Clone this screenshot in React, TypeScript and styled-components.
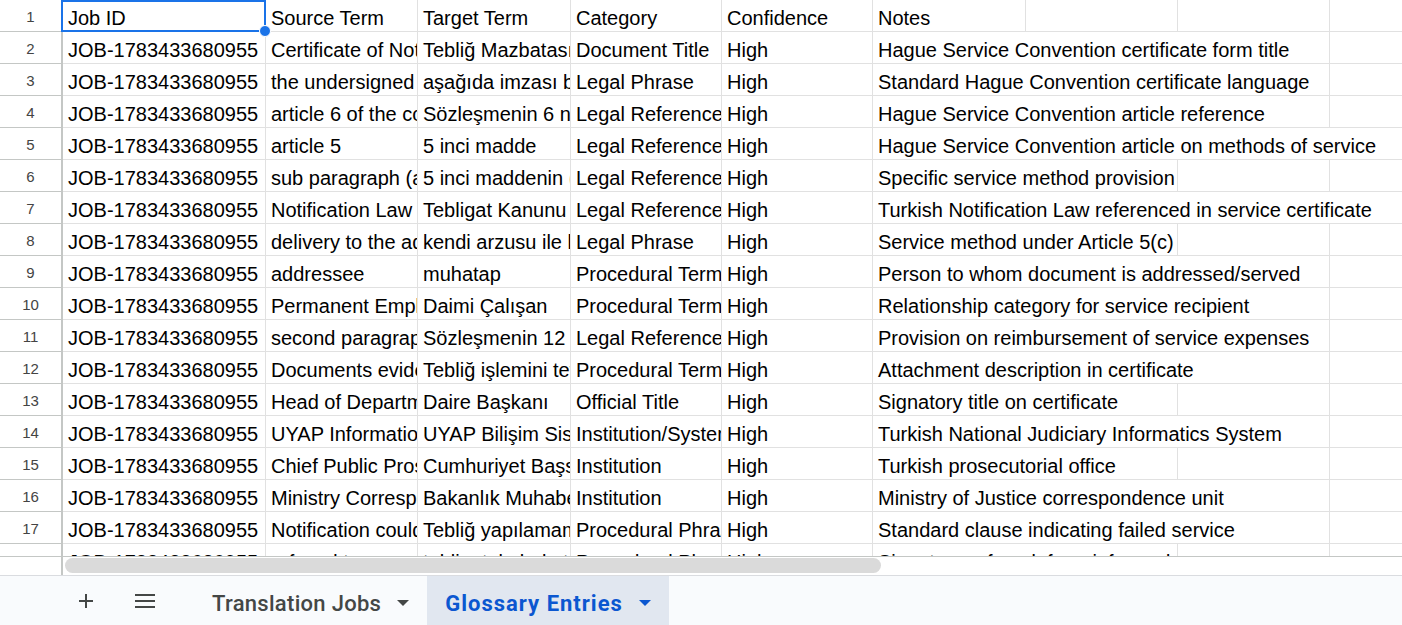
import * as React from 'react';
import styled, { createGlobalStyle } from 'styled-components';

// data
const COLUMN_WIDTHS = [203, 152, 153, 151, 151, 153, 152, 152, 152];

interface IEntry {
	readonly cells: string[];
	readonly noteSpan: number;
}

const JOB = 'JOB-1783433680955';

const ENTRIES: IEntry[] = [
	{ cells: ['Job ID', 'Source Term', 'Target Term', 'Category', 'Confidence', 'Notes'], noteSpan: 1 },
	{ cells: [JOB, 'Certificate of Notification', 'Tebliğ Mazbatası', 'Document Title', 'High', 'Hague Service Convention certificate form title'], noteSpan: 3 },
	{ cells: [JOB, 'the undersigned authority', 'aşağıda imzası bulunan makam', 'Legal Phrase', 'High', 'Standard Hague Convention certificate language'], noteSpan: 3 },
	{ cells: [JOB, 'article 6 of the convention', 'Sözleşmenin 6 ncı maddesi', 'Legal Reference', 'High', 'Hague Service Convention article reference'], noteSpan: 3 },
	{ cells: [JOB, 'article 5', '5 inci madde', 'Legal Reference', 'High', 'Hague Service Convention article on methods of service'], noteSpan: 4 },
	{ cells: [JOB, 'sub paragraph (a)', '5 inci maddenin (a) bendi', 'Legal Reference', 'High', 'Specific service method provision'], noteSpan: 2 },
	{ cells: [JOB, 'Notification Law No. 7201', 'Tebligat Kanunu 7201', 'Legal Reference', 'High', 'Turkish Notification Law referenced in service certificate'], noteSpan: 4 },
	{ cells: [JOB, 'delivery to the addressee', 'kendi arzusu ile kabul eden', 'Legal Phrase', 'High', 'Service method under Article 5(c)'], noteSpan: 2 },
	{ cells: [JOB, 'addressee', 'muhatap', 'Procedural Term', 'High', 'Person to whom document is addressed/served'], noteSpan: 3 },
	{ cells: [JOB, 'Permanent Employee', 'Daimi Çalışan', 'Procedural Term', 'High', 'Relationship category for service recipient'], noteSpan: 3 },
	{ cells: [JOB, 'second paragraph of article 12', 'Sözleşmenin 12 nci maddesi', 'Legal Reference', 'High', 'Provision on reimbursement of service expenses'], noteSpan: 3 },
	{ cells: [JOB, 'Documents evidencing service', 'Tebliğ işlemini tevsik eden', 'Procedural Term', 'High', 'Attachment description in certificate'], noteSpan: 3 },
	{ cells: [JOB, 'Head of Department', 'Daire Başkanı', 'Official Title', 'High', 'Signatory title on certificate'], noteSpan: 2 },
	{ cells: [JOB, 'UYAP Information System', 'UYAP Bilişim Sistemi', 'Institution/System', 'High', 'Turkish National Judiciary Informatics System'], noteSpan: 3 },
	{ cells: [JOB, "Chief Public Prosecutor's Office", 'Cumhuriyet Başsavcılığı', 'Institution', 'High', 'Turkish prosecutorial office'], noteSpan: 2 },
	{ cells: [JOB, 'Ministry Correspondence Unit', 'Bakanlık Muhaberat Birimi', 'Institution', 'High', 'Ministry of Justice correspondence unit'], noteSpan: 3 },
	{ cells: [JOB, 'Notification could not be made', 'Tebliğ yapılamamıştır', 'Procedural Phrase', 'High', 'Standard clause indicating failed service'], noteSpan: 3 },
	{ cells: [JOB, 'refused to accept', 'tebligatı kabul etmedi', 'Procedural Phrase', 'High', 'Signature refused, form informed'], noteSpan: 2 }
];

// helpers
const spanWidth = (start: number, span: number) =>
	COLUMN_WIDTHS.slice(start, start + span).reduce((a, b) => a + b, 0);

const renderRow = (entry: IEntry, index: number) => {
	const fixed = entry.cells.slice(0, 5).map((text, col) => (
		<Cell key={col} $width={COLUMN_WIDTHS[col]} $selected={index === 0 && col === 0}>
			{text}
		</Cell>
	));
	const noteEnd = 5 + entry.noteSpan;
	const rest = COLUMN_WIDTHS.slice(noteEnd).map((w, i) => <Cell key={noteEnd + i} $width={w} />);
	return (
		<Row key={index}>
			<RowHeader>{index + 1}</RowHeader>
			{fixed}
			<Cell $width={spanWidth(5, entry.noteSpan)}>{entry.cells[5]}</Cell>
			{rest}
		</Row>
	);
};

const PlusIcon = () => (
	<svg width="16" height="16" viewBox="0 0 16 16">
		<path d="M8 1v14M1 8h14" stroke="#444746" strokeWidth="2" fill="none" />
	</svg>
);

const MenuIcon = () => (
	<svg width="22" height="16" viewBox="0 0 22 16">
		<path d="M1 2h20M1 8h20M1 14h20" stroke="#444746" strokeWidth="2" fill="none" />
	</svg>
);

const Caret = ({ color }: { color: string }) => (
	<svg width="12" height="6" viewBox="0 0 12 6">
		<path d="M0 0h12L6 6z" fill={color} />
	</svg>
);

const App: React.FC = () => (
	<>
		<GlobalStyle />
		<Page>
			<GridArea>{ENTRIES.map(renderRow)}</GridArea>
			<ScrollStrip>
				<ScrollCorner />
				<ScrollTrack>
					<ScrollThumb />
				</ScrollTrack>
			</ScrollStrip>
			<TabBar>
				<IconButton>
					<PlusIcon />
				</IconButton>
				<IconButton>
					<MenuIcon />
				</IconButton>
				<SheetTab>
					Translation Jobs
					<Caret color="#444746" />
				</SheetTab>
				<SheetTab $active>
					Glossary Entries
					<Caret color="#0b57d0" />
				</SheetTab>
			</TabBar>
		</Page>
	</>
);

export default App;

// css
const GlobalStyle = createGlobalStyle`
	html, body {
		margin: 0;
		padding: 0;
		background: #ffffff;
		overflow: hidden;
	}
`;

const Page = styled.div`
	width: 1402px;
	height: 625px;
	display: flex;
	flex-direction: column;
	overflow: hidden;
	font-family: 'Liberation Sans', Arial, sans-serif;
`;

const GridArea = styled.div`
	height: 556px;
	overflow: hidden;
	flex-shrink: 0;
`;

const Row = styled.div`
	display: flex;
	height: 32px;
	width: max-content;
`;

const RowHeader = styled.div`
	width: 63px;
	flex-shrink: 0;
	border-right: 2px solid #c4c7c5;
	border-bottom: 1px solid #c4c7c5;
	display: flex;
	align-items: center;
	justify-content: center;
	font-size: 15px;
	color: #444;
	padding-top: 1px;
	box-sizing: border-box;
	height: 32px;
`;

const Cell = styled.div<{ $width: number; $selected?: boolean }>`
	position: relative;
	width: ${p => p.$width}px;
	flex-shrink: 0;
	height: 32px;
	box-sizing: border-box;
	border-right: 1px solid #e1e1e1;
	border-bottom: 1px solid #e1e1e1;
	padding: 0 0 1px 5px;
	display: flex;
	align-items: flex-end;
	font-size: 20px;
	color: #000;
	white-space: nowrap;
	overflow: ${p => (p.$selected ? 'visible' : 'hidden')};
	z-index: ${p => (p.$selected ? 2 : 'auto')};
	${p =>
		p.$selected &&
		`
		&::before {
			content: '';
			position: absolute;
			left: -2px;
			top: 0;
			right: -1px;
			bottom: -1px;
			border: 2px solid #1a73e8;
		}
		&::after {
			content: '';
			position: absolute;
			right: -6px;
			bottom: -6px;
			width: 10px;
			height: 10px;
			border-radius: 50%;
			background: #1a73e8;
			border: 1px solid #fff;
		}
	`}
`;

const ScrollStrip = styled.div`
	display: flex;
	height: 20px;
	border-top: 1px solid #c4c7c5;
	border-bottom: 1px solid #dadce0;
	box-sizing: border-box;
	flex-shrink: 0;
`;

const ScrollCorner = styled.div`
	width: 61px;
	border-right: 2px solid #c4c7c5;
`;

const ScrollTrack = styled.div`
	flex: 1;
	padding: 1px 0 0 2px;
`;

const ScrollThumb = styled.div`
	width: 816px;
	height: 15px;
	border-radius: 8px;
	background: #dadada;
`;

const TabBar = styled.div`
	flex: 1;
	background: #f9fbfd;
	display: flex;
	align-items: stretch;
	padding-left: 66px;
`;

const IconButton = styled.div`
	width: 40px;
	display: flex;
	align-items: center;
	justify-content: center;
	margin-right: 19px;
`;

const SheetTab = styled.div<{ $active?: boolean }>`
	display: flex;
	align-items: center;
	gap: 16px;
	padding: 5px 18px 0 ${p => (p.$active ? 18 : 22)}px;
	margin-left: ${p => (p.$active ? 0 : 6)}px;
	background: ${p => (p.$active ? '#e1e7f0' : 'transparent')};
	color: ${p => (p.$active ? '#0b57d0' : '#444746')};
	font-family: Roboto, 'Open Sans', sans-serif;
	font-weight: ${p => (p.$active ? 700 : 500)};
	font-size: 22px;
	letter-spacing: ${p => (p.$active ? 1 : 0.3)}px;
`;
